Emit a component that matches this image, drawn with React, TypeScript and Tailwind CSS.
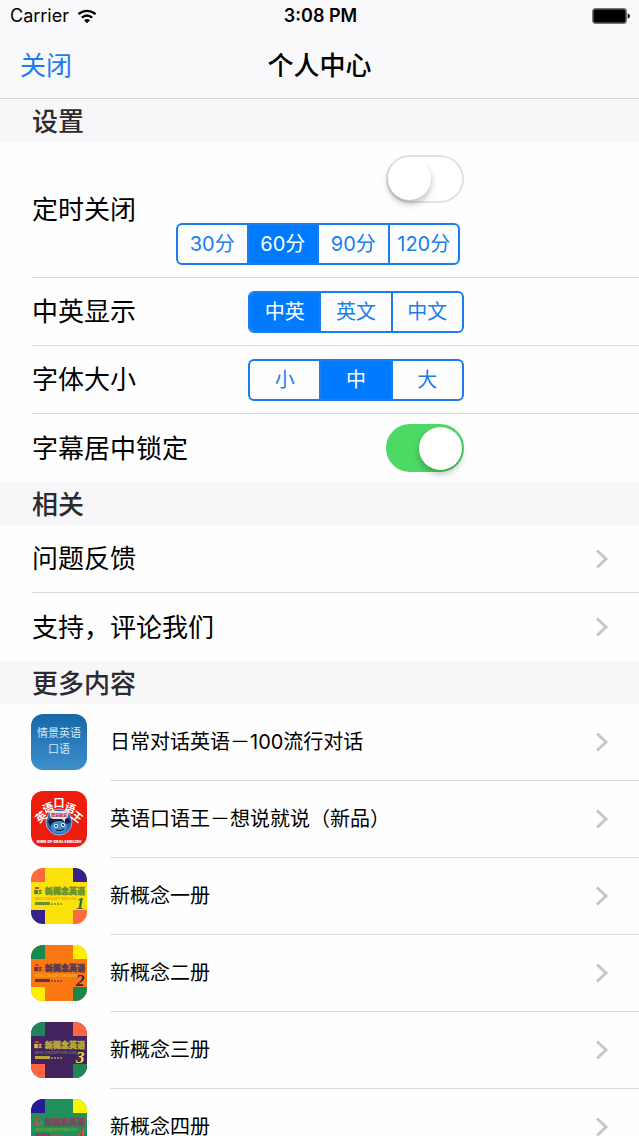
import React, { useState } from "react";

type SegmentedProps = {
  name: string;
  label: string;
  options: string[];
  initial: string;
  className: string;
};

function Segmented({ name, label, options, initial, className }: SegmentedProps) {
  const [value, setValue] = useState(initial);
  return (
    <div
      role="radiogroup"
      aria-label={label}
      className={`flex h-[42px] divide-x-2 divide-[#1a7df0] overflow-hidden rounded-md border-2 border-[#1a7df0] ${className}`}
    >
      {options.map((option) => (
        <label
          key={option}
          className="relative flex flex-1 cursor-pointer items-center justify-center text-xl whitespace-nowrap text-[#1a7df0] has-checked:bg-[#007aff] has-checked:text-white"
        >
          <input
            type="radio"
            name={name}
            value={option}
            checked={value === option}
            onChange={() => setValue(option)}
            className="sr-only"
          />
          {option}
        </label>
      ))}
    </div>
  );
}

function Toggle({ id, initial }: { id: string; initial: boolean }) {
  const [on, setOn] = useState(initial);
  return (
    <input
      id={id}
      type="checkbox"
      role="switch"
      checked={on}
      onChange={() => setOn(!on)}
      className="flex h-12 w-[78px] shrink-0 cursor-pointer appearance-none items-center rounded-full border-2 border-[#e3e1e4] bg-white before:size-[43px] before:rounded-full before:bg-white before:shadow-[0_4px_6px_rgba(0,0,0,0.25)] checked:justify-end checked:border-[#4cd964] checked:bg-[#4cd964]"
    />
  );
}

function Chevron() {
  return (
    <svg viewBox="0 0 14 20" className="h-5 w-3.5 shrink-0" fill="none" aria-hidden="true">
      <path d="M2 1.5 L11 10 L2 18.5" stroke="#c7c7cb" strokeWidth="3" />
    </svg>
  );
}

function SectionTitle({ children }: { children: React.ReactNode }) {
  return (
    <h2 className="flex h-[43px] items-center bg-[#f7f6f9] px-8 pt-0.5 text-[26px] font-medium text-[#2b2a2d]">
      {children}
    </h2>
  );
}

function SceneIcon() {
  return (
    <svg viewBox="0 0 56 56" className="size-14 shrink-0 rounded-xl" aria-hidden="true">
      <defs>
        <linearGradient id="scene" x1="0" y1="0" x2="0" y2="1">
          <stop offset="0" stopColor="#1668a8" />
          <stop offset="1" stopColor="#3c8fcb" />
        </linearGradient>
      </defs>
      <rect width="56" height="56" fill="url(#scene)" />
      <g fill="#d8e8f5" fontSize="11" textAnchor="middle">
        <text x="28" y="23">情景英语</text>
        <text x="28" y="39">口语</text>
      </g>
    </svg>
  );
}

const arc = [
  { char: "英", x: 10, y: 26, angle: -38 },
  { char: "语", x: 17, y: 17, angle: -22 },
  { char: "口", x: 28, y: 12, angle: 0 },
  { char: "语", x: 39, y: 17, angle: 22 },
  { char: "王", x: 46, y: 26, angle: 38 },
];

function KingIcon() {
  return (
    <svg viewBox="0 0 56 56" className="size-14 shrink-0 rounded-xl" aria-hidden="true">
      <rect width="56" height="56" fill="#ee1c0c" />
      <circle cx="28" cy="31" r="13" fill="#2a64ad" stroke="#9db7dc" strokeWidth="1" />
      <path d="M17 31 C18 24 36 22 40 31 L36 33 C30 29 25 30 20 36 Z" fill="#14213c" />
      <path d="M20 36 C20 29 33 28 36 34 C38 40 32 43 27 42 C22 42 20 40 20 36 Z" fill="#3d8ad6" />
      <circle cx="25" cy="35" r="2" fill="#fff" />
      <circle cx="32" cy="34" r="2" fill="#fff" />
      <circle cx="25" cy="35" r="1" fill="#111" />
      <circle cx="32" cy="34" r="1" fill="#111" />
      <path d="M25 39 Q29 41 33 38" stroke="#111" fill="none" />
      <rect x="19" y="20" width="18" height="8" rx="4" fill="#f7e9ea" />
      <path d="M30 27 L34 31 L34 27 Z" fill="#f7e9ea" />
      <text x="28" y="26" fontSize="4" fontWeight="900" fill="#b3272b" textAnchor="middle">
        想说就说
      </text>
      <g fill="#fff" fontSize="11" fontWeight="700" textAnchor="middle">
        {arc.map(({ char, x, y, angle }) => (
          <text key={x} transform={`translate(${x} ${y}) rotate(${angle})`} y="4">
            {char}
          </text>
        ))}
      </g>
      <text x="28" y="52" fontSize="3.8" fontWeight="900" fill="#fff" textAnchor="middle">
        KING OF ORAL ENGLISH
      </text>
    </svg>
  );
}

type Cover = {
  base: string;
  cornerA: string;
  cornerB: string;
  title: string;
  accent: string;
  digit: string;
  volume: string;
};

function BookIcon({ base, cornerA, cornerB, title, accent, digit, volume }: Cover) {
  return (
    <svg viewBox="0 0 56 56" className="size-14 shrink-0 rounded-xl" aria-hidden="true">
      <rect width="56" height="56" fill={base} />
      <rect width="14" height="14" fill={cornerA} />
      <rect x="42" y="42" width="14" height="14" fill={cornerA} />
      <rect x="42" width="14" height="14" fill={cornerB} />
      <rect y="42" width="14" height="14" fill={cornerB} />
      <rect x="4" y="19" width="4" height="2" fill="#e23a35" />
      <text x="3" y="26" fontSize="4" fontWeight="900" fill={digit}>
        朗文
      </text>
      <text x="14" y="26" fontSize="8" fontWeight="900" fill={title} stroke={title} strokeWidth="0.5">
        新概念英语
      </text>
      <text x="4" y="32" fontSize="3.4" fontWeight="700" fill={accent}>
        NEW CONCEPT ENGLISH
      </text>
      <rect x="4" y="34" width="15" height="3" fill={title} />
      <path d="M20 36 H31" stroke={digit} strokeWidth="1" strokeDasharray="2 1" />
      <text
        x="45"
        y="41"
        fontSize="17"
        fontWeight="700"
        fontStyle="italic"
        fontFamily="Liberation Serif, serif"
        fill={digit}
      >
        {volume}
      </text>
    </svg>
  );
}

const books = [
  { title: "日常对话英语－100流行对话", icon: <SceneIcon /> },
  { title: "英语口语王－想说就说（新品）", icon: <KingIcon /> },
  {
    title: "新概念一册",
    icon: (
      <BookIcon base="#fbe20a" cornerA="#ff6940" cornerB="#36208c" title="#6e9130" accent="#f59a22" digit="#27702d" volume="1" />
    ),
  },
  {
    title: "新概念二册",
    icon: (
      <BookIcon base="#fb7712" cornerA="#17884e" cornerB="#fcf000" title="#563a55" accent="#fbb014" digit="#44204b" volume="2" />
    ),
  },
  {
    title: "新概念三册",
    icon: (
      <BookIcon base="#42235f" cornerA="#22855a" cornerB="#ff6540" title="#b5aa38" accent="#527b5c" digit="#f5dc3c" volume="3" />
    ),
  },
  {
    title: "新概念四册",
    icon: (
      <BookIcon base="#22905a" cornerA="#251b94" cornerB="#fcf400" title="#80455f" accent="#6aa832" digit="#e5403d" volume="4" />
    ),
  },
];

const links = ["问题反馈", "支持，评论我们"];

export default function App() {
  return (
    <div className="flex h-screen flex-col overflow-hidden bg-[#fefefe] font-[Inter,'Noto_Sans_CJK_SC',sans-serif] text-black">
      <header className="shrink-0 border-b border-[#d3d2d5] bg-[#f9f8fb]">
        <div className="grid h-8 grid-cols-3 items-center pr-2 pl-2.5 text-lg">
          <div className="flex items-center gap-2">
            <span>Carrier</span>
            <svg viewBox="0 0 20 15" className="h-[15px] w-5" fill="none" aria-hidden="true">
              <path d="M1.5 5.2 C6.5 0.8 13.5 0.8 18.5 5.2" stroke="#000" strokeWidth="2.4" />
              <path d="M4.8 8.7 C8 6 12 6 15.2 8.7" stroke="#000" strokeWidth="2.3" />
              <path d="M7 11.2 C8.8 9.7 11.2 9.7 13 11.2 L10 14.3 Z" fill="#000" />
            </svg>
          </div>
          <span className="text-center font-semibold">3:08 PM</span>
          <svg viewBox="0 0 39 16" className="h-4 w-[39px] justify-self-end" aria-hidden="true">
            <rect x="0.8" y="0.8" width="33.4" height="14.4" rx="2.5" fill="#000" stroke="#77757a" strokeWidth="1.4" />
            <path d="M35.6 5.5 Q38 6 38 8 Q38 10 35.6 10.5 Z" fill="#000" />
          </svg>
        </div>
        <nav className="grid grid-cols-3 items-center px-5 pt-3.5 pb-3 text-[26px] leading-10">
          <button type="button" className="cursor-pointer justify-self-start text-[#1a7df0]">
            关闭
          </button>
          <h1 className="text-center font-medium">个人中心</h1>
        </nav>
      </header>

      <main className="min-h-0 flex-1 overflow-y-auto text-[26px] [scrollbar-width:none]">
        <section>
          <SectionTitle>设置</SectionTitle>
          <div className="divide-y divide-[#dcdbde] pl-8">
            <div className="h-34">
              <div className="flex h-full max-w-[432px] items-center justify-between">
                <label htmlFor="timer">定时关闭</label>
                <div className="flex flex-col items-end gap-5">
                  <Toggle id="timer" initial={false} />
                  <Segmented
                    name="minutes"
                    label="定时关闭"
                    options={["30分", "60分", "90分", "120分"]}
                    initial="60分"
                    className="mr-1 w-71"
                  />
                </div>
              </div>
            </div>
            <div className="h-17">
              <div className="flex h-full max-w-[432px] items-center justify-between">
                <span>中英显示</span>
                <Segmented name="language" label="中英显示" options={["中英", "英文", "中文"]} initial="中英" className="w-54" />
              </div>
            </div>
            <div className="h-17">
              <div className="flex h-full max-w-[432px] items-center justify-between">
                <span>字体大小</span>
                <Segmented name="size" label="字体大小" options={["小", "中", "大"]} initial="中" className="w-54" />
              </div>
            </div>
            <div className="h-17">
              <div className="flex h-full max-w-[432px] items-center justify-between">
                <label htmlFor="lock">字幕居中锁定</label>
                <Toggle id="lock" initial={true} />
              </div>
            </div>
          </div>
        </section>

        <section>
          <SectionTitle>相关</SectionTitle>
          <div className="divide-y divide-[#dcdbde] pl-8">
            {links.map((link) => (
              <a key={link} href="#" className="flex h-17 items-center justify-between pr-[30px]">
                {link}
                <Chevron />
              </a>
            ))}
          </div>
        </section>

        <section>
          <SectionTitle>更多内容</SectionTitle>
          <ul className="text-xl">
            {books.map(({ title, icon }) => (
              <li key={title}>
                <a href="#" className="flex h-[77px] items-stretch gap-[23px] pl-[31px]">
                  <span className="flex items-center pb-0.5">{icon}</span>
                  <span className="flex flex-1 items-center justify-between border-b border-[#dcdbde] pr-[30px]">
                    {title}
                    <Chevron />
                  </span>
                </a>
              </li>
            ))}
          </ul>
        </section>
      </main>
    </div>
  );
}
